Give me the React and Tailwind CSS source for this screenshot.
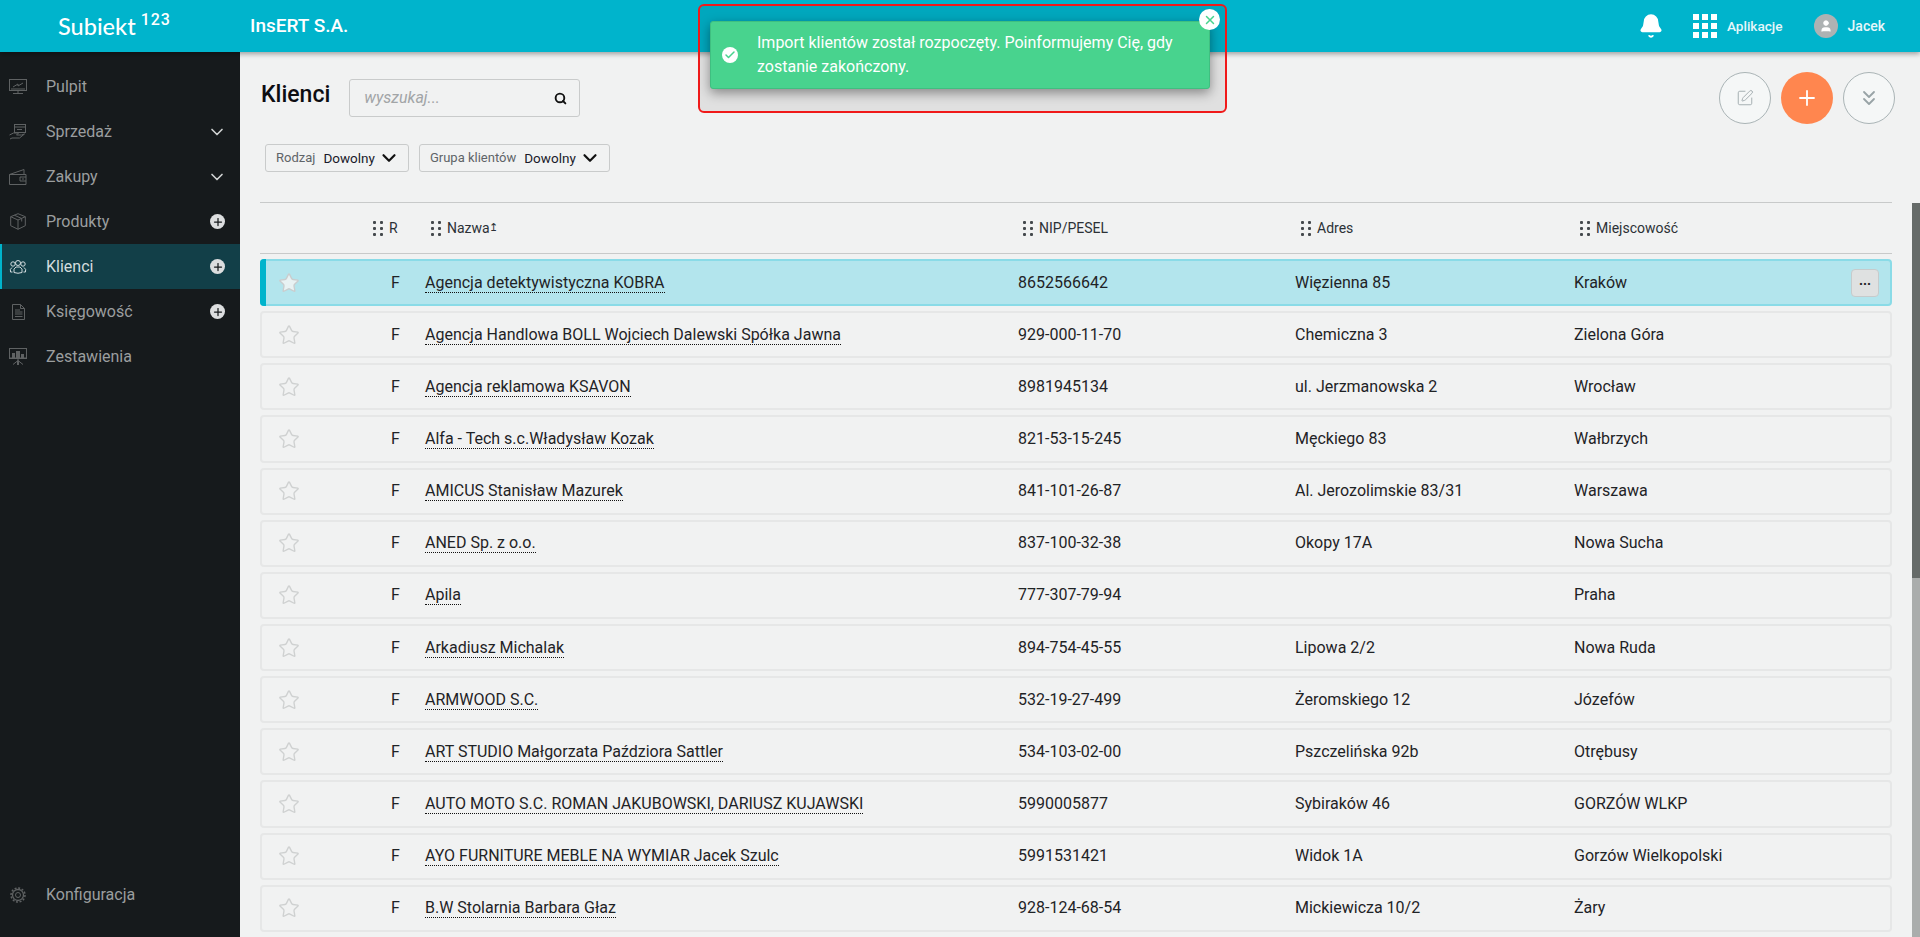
import React from 'react';
import { Star, ChevronDown, Plus, Check, X, Bell, User, Search, ChevronsDown, SquarePen } from 'lucide-react';

const KLIENCI = [
  { nazwa: 'Agencja detektywistyczna KOBRA', nip: '8652566642', adres: 'Więzienna 85', miasto: 'Kraków' },
  { nazwa: 'Agencja Handlowa BOLL Wojciech Dalewski Spółka Jawna', nip: '929-000-11-70', adres: 'Chemiczna 3', miasto: 'Zielona Góra' },
  { nazwa: 'Agencja reklamowa KSAVON', nip: '8981945134', adres: 'ul. Jerzmanowska 2', miasto: 'Wrocław' },
  { nazwa: 'Alfa - Tech s.c.Władysław Kozak', nip: '821-53-15-245', adres: 'Męckiego 83', miasto: 'Wałbrzych' },
  { nazwa: 'AMICUS Stanisław Mazurek', nip: '841-101-26-87', adres: 'Al. Jerozolimskie 83/31', miasto: 'Warszawa' },
  { nazwa: 'ANED Sp. z o.o.', nip: '837-100-32-38', adres: 'Okopy 17A', miasto: 'Nowa Sucha' },
  { nazwa: 'Apila', nip: '777-307-79-94', adres: '', miasto: 'Praha' },
  { nazwa: 'Arkadiusz Michalak', nip: '894-754-45-55', adres: 'Lipowa 2/2', miasto: 'Nowa Ruda' },
  { nazwa: 'ARMWOOD S.C.', nip: '532-19-27-499', adres: 'Żeromskiego 12', miasto: 'Józefów' },
  { nazwa: 'ART STUDIO Małgorzata Paździora Sattler', nip: '534-103-02-00', adres: 'Pszczelińska 92b', miasto: 'Otrębusy' },
  { nazwa: 'AUTO MOTO S.C. ROMAN JAKUBOWSKI, DARIUSZ KUJAWSKI', nip: '5990005877', adres: 'Sybiraków 46', miasto: 'GORZÓW WLKP' },
  { nazwa: 'AYO FURNITURE MEBLE NA WYMIAR Jacek Szulc', nip: '5991531421', adres: 'Widok 1A', miasto: 'Gorzów Wielkopolski' },
  { nazwa: 'B.W Stolarnia Barbara Głaz', nip: '928-124-68-54', adres: 'Mickiewicza 10/2', miasto: 'Żary' },
];

const IconPulpit = () => (
  <svg width="18" height="16" viewBox="0 0 18 16" fill="none" stroke="currentColor" strokeWidth="1">
    <rect x="0.5" y="0.5" width="17" height="11" />
    <path d="M2 10h14M4 8l5-3v2l5-3M9 12v2M4 14.5h10" />
  </svg>
);
const IconSprzedaz = () => (
  <svg width="18" height="16" viewBox="0 0 18 16" fill="none" stroke="currentColor" strokeWidth="1">
    <rect x="5.5" y="0.5" width="11" height="8" />
    <path d="M5.5 3h11M8 5.5h5M0.5 11l4-2h5l-2 2h5l3-1-5 4H3l-2 1" />
  </svg>
);
const IconZakupy = () => (
  <svg width="18" height="16" viewBox="0 0 18 16" fill="none" stroke="currentColor" strokeWidth="1">
    <path d="M0.5 5.5h16.5v10H0.5zM0.5 5.5L15 0.5v5M17 8h-6v4h6M13 10h2" />
  </svg>
);
const IconProdukty = () => (
  <svg width="16" height="17" viewBox="0 0 16 17" fill="none" stroke="currentColor" strokeWidth="1">
    <path d="M8 .7l7.3 3v9L8 16.3.7 12.7v-9zM.7 3.700L8 7l7.300-3.300M8 7v9.300M4.300 2.200l7.400 3.300v3" />
  </svg>
);
const IconKlienci = () => (
  <svg width="18" height="14" viewBox="0 0 18 14" fill="none" stroke="currentColor" strokeWidth="1">
    <circle cx="4" cy="4" r="2.200" />
    <circle cx="14" cy="4" r="2.200" />
    <circle cx="9" cy="3" r="2.500" />
    <path d="M3.500 12H1.500Q.5 9 3 7.500M14.500 12h2q1-3-1.500-4.500M5 12.500Q4 8.500 7 7h4q3 1.500 2 5.500q-4 1.500-8 0z" />
  </svg>
);
const IconKsiegowosc = () => (
  <svg width="13" height="16" viewBox="0 0 13 16" fill="none" stroke="currentColor" strokeWidth="1">
    <path d="M.5.500h8l4 4v11H.5zM8.500.500v4h4M3 6h5M3 8h7.500M3 10h7.500M3 12.500h7.500" />
  </svg>
);
const IconZestawienia = () => (
  <svg width="18" height="17" viewBox="0 0 18 17" fill="currentColor">
    <path d="M0 0h18v1H0zM0 1h1v9H0zM17 1h1v9h-1zM0 9.500h18V11H0zM3 5h3v4.500H3zM7 3h4v6.500H7zM12 6h3v3.500h-3zM8.500 11h1v2h-1z" />
    <path d="M9 12.500l-5 4M9 12.500l5 4M8.500 13h1v4h-1z" stroke="currentColor" strokeWidth="1" />
  </svg>
);
const IconGear = () => (
  <svg width="16" height="16" viewBox="0 0 16 16" fill="none" stroke="currentColor">
    <circle cx="8" cy="8" r="2.500" strokeWidth="1" />
    <circle cx="8" cy="8" r="5.500" strokeWidth="1.300" />
    <circle cx="8" cy="8" r="7" strokeWidth="1.500" strokeDasharray="2 1.660" />
  </svg>
);

const MENU = [
  { label: 'Pulpit', icon: <IconPulpit /> },
  { label: 'Sprzedaż', icon: <IconSprzedaz />, akcja: 'chevron' },
  { label: 'Zakupy', icon: <IconZakupy />, akcja: 'chevron' },
  { label: 'Produkty', icon: <IconProdukty />, akcja: 'plus' },
  { label: 'Klienci', icon: <IconKlienci />, akcja: 'plus', active: true },
  { label: 'Księgowość', icon: <IconKsiegowosc />, akcja: 'plus' },
  { label: 'Zestawienia', icon: <IconZestawienia /> },
];

const MenuItem = ({ label, icon, akcja, active }) => (
  <div className={`flex items-center h-[45px] ${active ? 'bg-[#123f48] border-l-2 border-[#00b4cc] text-[#d3dcde]' : 'border-l-2 border-transparent text-[#9b9e9f]'}`}>
    <div className={`w-[32px] flex justify-center ${active ? 'text-[#d3dcde]' : 'text-[#5f6263]'}`}>{icon}</div>
    <span className="ml-[12px] flex-1 text-[16px] pt-[1px]">{label}</span>
    {akcja === 'chevron' && <ChevronDown size={20} strokeWidth={2} className="mr-[13px] text-[#d0d2d2]" />}
    {akcja === 'plus' && (
      <span className="mr-[15px] w-[15px] h-[15px] rounded-full bg-[#dcdedf] flex items-center justify-center">
        <Plus size={12} strokeWidth={2.5} className="text-[#161a1c]" />
      </span>
    )}
  </div>
);

const Sidebar = () => (
  <aside className="w-[240px] shrink-0 bg-[#161a1c] flex flex-col justify-between pt-[12px] pb-[20px]">
    <div>
      {MENU.map((m) => (
        <MenuItem key={m.label} {...m} />
      ))}
    </div>
    <MenuItem label="Konfiguracja" icon={<IconGear />} />
  </aside>
);

const Topbar = () => (
  <header className="relative z-10 h-[52px] shrink-0 bg-[#00b4cc] shadow-[0_2px_5px_rgba(0,0,0,0.35)] flex items-center text-white">
    <div className="w-[250px] shrink-0 pl-[58px] flex items-start">
      <span className="text-[23.500px] leading-[28px] font-medium font-['Lato',sans-serif]">Subiekt</span>
      <span className="ml-[5px] -mt-[2px] text-[16px] leading-[20px] font-medium tracking-[1px]">123</span>
    </div>
    <span className="text-[19px] font-medium">InsERT S.A.</span>
    <div className="ml-auto flex items-center">
      <Bell size={26} fill="white" strokeWidth={1.500} />
      <div className="ml-[29px] grid grid-cols-[6px_6px_6px] gap-[3px]">
        {[1, 2, 3, 4, 5, 6, 7, 8, 9].map((n) => (
          <span key={n} className="w-[6px] h-[6px] bg-white" />
        ))}
      </div>
      <span className="ml-[10px] text-[13.600px] font-medium text-[#e6f7fa]">Aplikacje</span>
      <span className="ml-[31px] w-[24px] h-[24px] rounded-full bg-[#adb2b3] flex items-center justify-center">
        <User size={14} fill="white" strokeWidth={1.500} />
      </span>
      <span className="ml-[10px] mr-[35px] text-[14px] font-medium text-[#e6f7fa]">Jacek</span>
    </div>
  </header>
);

const Filtr = ({ label }) => (
  <div className="h-[28px] pl-[10px] pr-[8px] rounded-[3px] border border-[#c9cbcb] flex items-center text-[13px]">
    <span className="text-[#5f6468]">{label}</span>
    <span className="ml-[8px] text-[13.500px] text-[#1a1a2a]">Dowolny</span>
    <ChevronDown size={22} strokeWidth={2.400} className="ml-[3px] text-[#111]" />
  </div>
);

const Dots = () => (
  <span className="grid grid-cols-[3px_3px] gap-x-[4px] gap-y-[3px] mr-[6px]">
    {[1, 2, 3, 4, 5, 6].map((n) => (
      <span key={n} className="w-[3px] h-[3px] rounded-[1px] bg-[#44494d]" />
    ))}
  </span>
);

const Kolumna = ({ children }) => (
  <div className="flex items-center text-[14px] text-[#2c3136]">
    <Dots />
    {children}
  </div>
);

const Wiersz = ({ klient, active }) => (
  <div className={`relative shrink-0 h-[47.150px] grid grid-cols-[129px_34px_593px_277px_279px_1fr] items-center rounded-[4px] border-2 text-[16px] text-[#1f2326] ${active ? 'bg-[#b3e5ed] border-[#8adbe7]' : 'bg-[#f1f2f2] border-[#e6e7e7]'}`}>
    {active && <span className="absolute -left-[2px] -top-[2px] -bottom-[2px] w-[6px] rounded-l-[4px] bg-[#00b4cc]" />}
    <div className="pl-[16px]">
      <Star size={22} strokeWidth={1.500} className={active ? 'fill-[#e8f2f3] text-[#c9cdce]' : 'text-[#cfd1d1]'} />
    </div>
    <span>F</span>
    <div>
      <span className="border-b border-dotted border-[#111]">{klient.nazwa}</span>
    </div>
    <span>{klient.nip}</span>
    <span>{klient.adres}</span>
    <div className="flex items-center justify-between pr-[11px]">
      <span>{klient.miasto}</span>
      {active && (
        <button className="w-[28px] h-[28px] rounded-[4px] border border-[#c6cbcc] bg-[#dfe1e1] flex items-center justify-center text-[14px] font-bold leading-none pb-[6px]">
          ...
        </button>
      )}
    </div>
  </div>
);

const Naglowek = () => (
  <div className="mt-[30px] h-[52px] shrink-0 border-t border-[#c8caca]">
    <div className="h-[51px] grid grid-cols-[113px_58px_592px_278px_279px_1fr] items-center border-b border-[#c8caca]">
      <span />
      <Kolumna>R</Kolumna>
      <Kolumna>
        Nazwa<span className="text-[11px] -ml-[1px]">↥</span>
      </Kolumna>
      <Kolumna>NIP/PESEL</Kolumna>
      <Kolumna>Adres</Kolumna>
      <Kolumna>Miejscowość</Kolumna>
    </div>
  </div>
);

const Akcje = () => (
  <div className="ml-auto mr-[-3px] flex items-center gap-[10px]">
    <button className="w-[52px] h-[52px] rounded-full border border-[#aab4b6] bg-[#f5f7f7] flex items-center justify-center text-[#a4adb0]">
      <SquarePen size={18} strokeWidth={1.300} />
    </button>
    <button className="w-[52px] h-[52px] rounded-full bg-[#ff864f] flex items-center justify-center text-white">
      <Plus size={24} strokeWidth={1.800} />
    </button>
    <button className="w-[52px] h-[52px] rounded-full border border-[#aab4b6] bg-[#f5f7f7] flex items-center justify-center text-[#98a3a6]">
      <ChevronsDown size={24} strokeWidth={1.800} />
    </button>
  </div>
);

const Powiadomienie = () => (
  <div className="absolute z-20 left-[698px] top-[4px] w-[529px] h-[109px] rounded-[6px] border-2 border-[#f01a1a] bg-black/[0.07]">
    <div className="absolute left-[10px] top-[15px] w-[500px] h-[68px] rounded-[3px] bg-[#48d38e] border border-[#3fbf80] shadow-[0_4px_12px_rgba(0,0,0,0.4)] flex items-center text-white">
      <span className="ml-[11px] w-[16px] h-[16px] rounded-full bg-white flex items-center justify-center">
        <Check size={12} strokeWidth={3} className="text-[#48d38e]" />
      </span>
      <p className="ml-[19px] w-[440px] text-[16px] leading-[24px]">
        Import klientów został rozpoczęty. Poinformujemy Cię, gdy zostanie zakończony.
      </p>
    </div>
    <span className="absolute left-[499px] top-[3px] w-[21px] h-[21px] rounded-full bg-white flex items-center justify-center">
      <X size={14} strokeWidth={2.500} className="text-[#48d38e]" />
    </span>
  </div>
);

export default function App() {
  return (
    <div className="relative h-screen overflow-hidden flex flex-col bg-[#f1f2f2] font-['Roboto',sans-serif]">
      <Topbar />
      <div className="flex flex-1 min-h-0">
        <Sidebar />
        <main className="flex-1 min-w-0 flex flex-col pl-[20px] pr-[28px] overflow-hidden">
          <div className="mt-[20px] flex items-start">
            <h1 className="mt-[9px] ml-[1px] text-[23px] leading-[28px] font-medium text-[#0d0d12]">Klienci</h1>
            <div className="mt-[7px] ml-[19px] w-[231px] h-[38px] rounded-[3px] border border-[#c9cbcb] flex items-center justify-between pl-[14px] pr-[12px]">
              <span className="text-[16px] italic text-[#a2a5a7]">wyszukaj...</span>
              <Search size={13} strokeWidth={3.500} className="text-[#111]" />
            </div>
            <Akcje />
          </div>
          <div className="mt-[20px] ml-[5px] flex gap-[10px]">
            <Filtr label="Rodzaj" />
            <Filtr label="Grupa klientów" />
          </div>
          <Naglowek />
          <div className="mt-[5px] flex flex-col gap-[5px]">
            {KLIENCI.map((k, i) => (
              <Wiersz key={k.nazwa} klient={k} active={i === 0} />
            ))}
          </div>
        </main>
      </div>
      <div className="absolute right-0 top-[203px] bottom-0 w-[8px] bg-[#aaadac]">
        <div className="h-[375px] bg-[#666b69]" />
      </div>
      <Powiadomienie />
    </div>
  );
}
